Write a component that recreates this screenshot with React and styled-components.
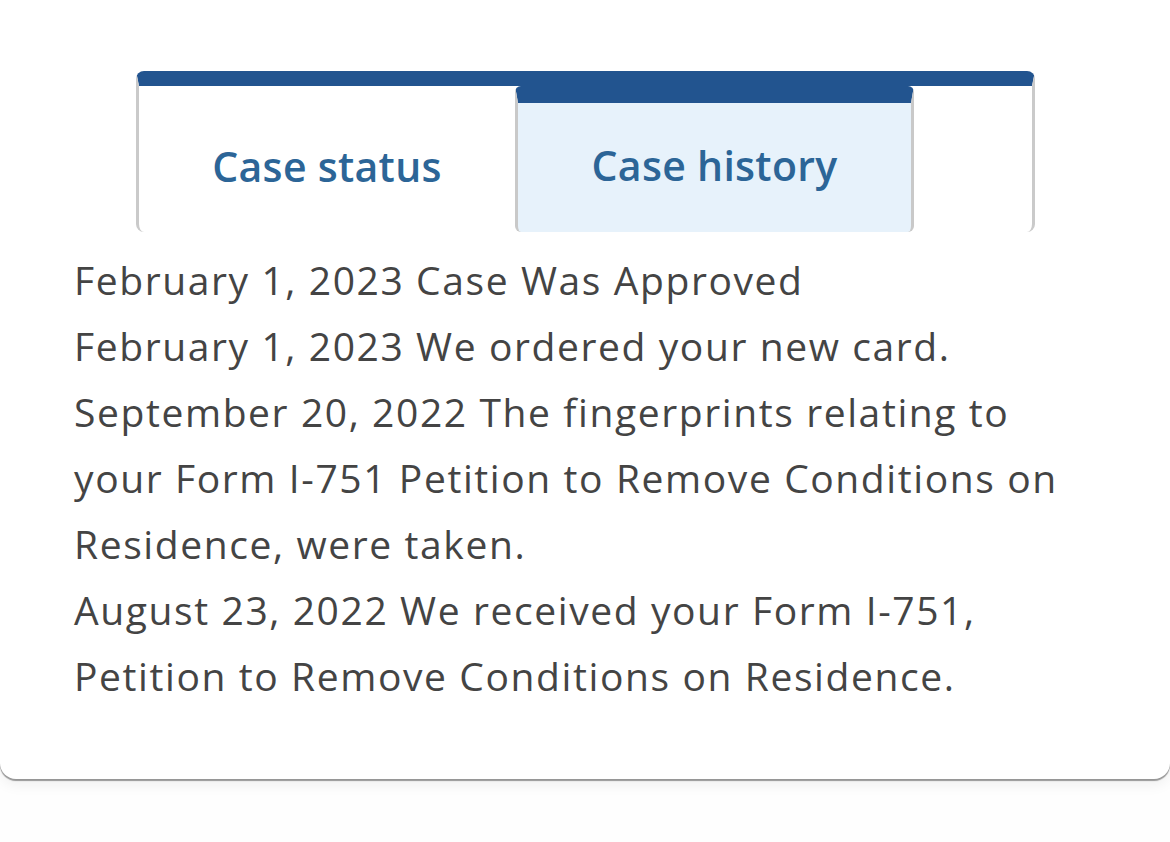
import React from "react";
import styled, { createGlobalStyle } from "styled-components";

const GlobalStyle = createGlobalStyle`
  body {
    margin: 0;
    background: #fefefe;
    font-family: "Open Sans", "Liberation Sans", sans-serif;
  }
`;

const Page = styled.div`
  width: 1170px;
  height: 842px;
  overflow: hidden;
`;

const Card = styled.section`
  background: #fff;
  border-radius: 0 0 16px 16px;
  box-shadow: 0 2px 1px rgba(0, 0, 0, 0.38), 0 6px 14px rgba(0, 0, 0, 0.06);
  padding: 71px 0 70px 74px;
`;

const TabBar = styled.div`
  margin-left: 62px;
  width: 899px;
  height: 161px;
  box-sizing: border-box;
  border-top: 15px solid #22548f;
  border-left: 3px solid #cacaca;
  border-right: 3px solid #cacaca;
  border-radius: 8px;
  display: grid;
  grid-template-columns: 376px 399px 1fr;
  align-items: stretch;
`;

const Tab = styled.button`
  all: unset;
  box-sizing: border-box;
  display: flex;
  align-items: center;
  justify-content: center;
  font-family: "Open Sans", sans-serif;
  font-weight: 600;
  font-size: 41px;
  letter-spacing: 0.3px;
  color: #2c6597;
  cursor: pointer;
  padding-top: 14px;
  ${(p) =>
    p.$current &&
    `
    background: #e7f2fb;
    border-top: 17px solid #22548f;
    border-left: 3px solid #c9c9c9;
    border-right: 3px solid #c9c9c9;
    border-radius: 6px;
    padding-top: 0;
    padding-bottom: 5px;
  `}
`;

const History = styled.div`
  padding-top: 15px;
  color: #444;
  font-size: 39px;
  letter-spacing: 1.6px;
  line-height: 66px;
`;

const Entry = styled.p`
  margin: 0;
  white-space: nowrap;
`;

const entries = [
  ["February 1, 2023 Case Was Approved"],
  ["February 1, 2023 We ordered your new card."],
  [
    "September 20, 2022 The fingerprints relating to",
    "your Form I-751 Petition to Remove Conditions on",
    "Residence, were taken.",
  ],
  [
    "August 23, 2022 We received your Form I-751,",
    "Petition to Remove Conditions on Residence.",
  ],
];

export default function App() {
  return (
    <Page>
      <GlobalStyle />
      <Card>
        <TabBar role="tablist">
          <Tab role="tab">Case status</Tab>
          <Tab role="tab" $current>
            Case history
          </Tab>
        </TabBar>
        <History>
          {entries.map((lines, i) => (
            <Entry key={i}>
              {lines.map((line, j) => (
                <React.Fragment key={j}>
                  {j > 0 && <br />}
                  {line}
                </React.Fragment>
              ))}
            </Entry>
          ))}
        </History>
      </Card>
    </Page>
  );
}
